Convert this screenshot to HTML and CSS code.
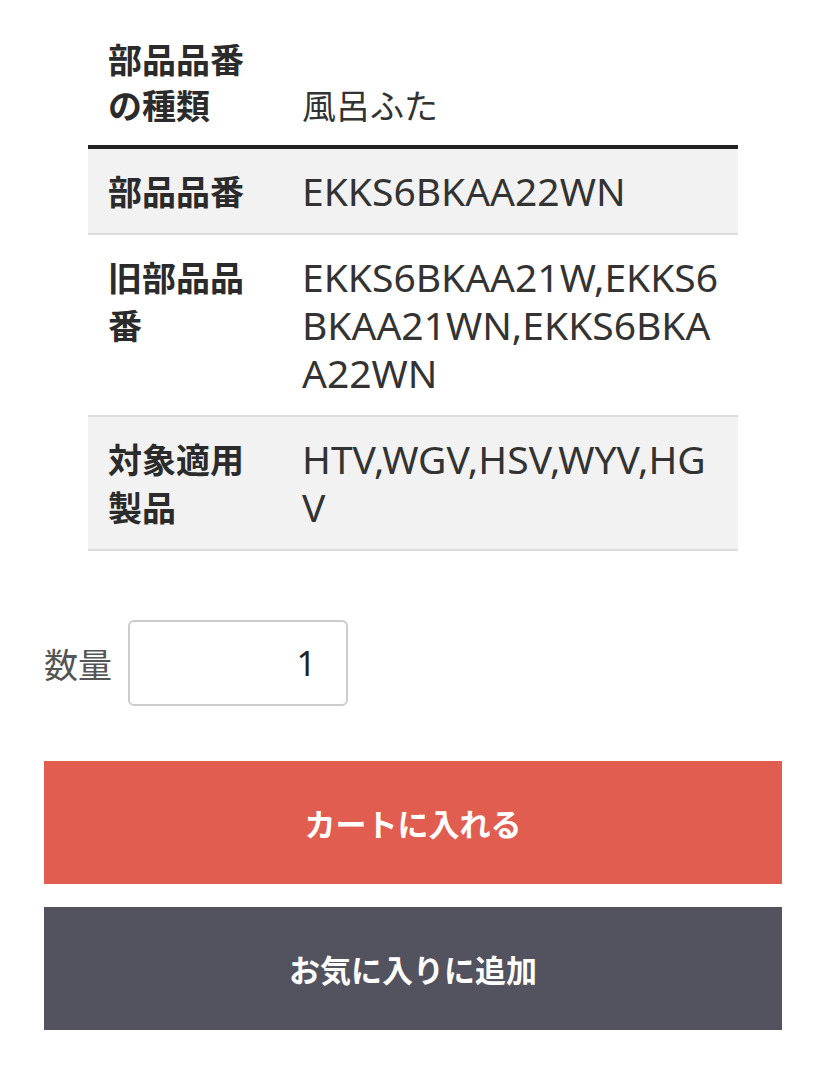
FILE: index.html
```html
<!DOCTYPE html>
<html lang="ja">
<head>
<meta charset="utf-8">
<link rel="stylesheet" href="styles.css">
</head>
<body>
<div class="page">
  <table class="spec">
    <colgroup>
      <col class="col-head">
      <col class="col-val">
    </colgroup>
    <tr class="first">
      <th>部品品番の種類</th>
      <td>風呂ふた</td>
    </tr>
    <tr class="shade">
      <th>部品品番</th>
      <td class="latin">EKKS6BKAA22WN</td>
    </tr>
    <tr>
      <th>旧部品品番</th>
      <td class="latin">EKKS6BKAA21W,EKKS6BKAA21WN,EKKS6BKAA22WN</td>
    </tr>
    <tr class="shade">
      <th>対象適用製品</th>
      <td class="latin">HTV,WGV,HSV,WYV,HGV</td>
    </tr>
  </table>

  <div class="qty">
    <label class="qty-label" for="qty">数量</label>
    <input class="qty-input" id="qty" type="text" value="1">
  </div>

  <div class="actions">
    <button class="btn btn-cart">カートに入れる</button>
    <button class="btn btn-fav">お気に入りに追加</button>
  </div>
</div>
</body>
</html>
```

FILE: styles.css
```css
html, body {
  margin: 0;
  padding: 0;
  background: #fff;
}
body {
  font-family: "Noto Sans", "Noto Sans CJK JP", sans-serif;
  color: #333;
}
.page {
  padding: 18px 46px 40px 44px;
}
.spec {
  margin-left: 44px;
  width: 650px;
  table-layout: fixed;
  border-collapse: collapse;
  font-size: 34px;
  line-height: 48px;
}
.col-head {
  width: 214px;
}
.spec th, .spec td {
  vertical-align: top;
  text-align: left;
  border-bottom: 2px solid #dddddd;
  word-break: break-all;
}
.spec th {
  padding: 18px 32px 18px 20px;
  font-family: "Noto Sans CJK JP", sans-serif;
  font-weight: 700;
  color: #2b2b2b;
}
.spec td {
  padding: 18px 16px 18px 0;
  font-family: "Noto Sans CJK JP", sans-serif;
  font-weight: 400;
  color: #333;
}
.spec td.latin {
  font-family: "Noto Sans", sans-serif;
  font-size: 39px;
}
.spec tr.first th, .spec tr.first td {
  border-bottom: 4px solid #222;
  vertical-align: bottom;
  padding-top: 18px;
  padding-bottom: 17px;
  line-height: 46px;
}
.spec tr.shade {
  background: #f2f2f2;
}
.qty {
  display: flex;
  align-items: center;
  gap: 16px;
  margin-top: 69px;
}
.qty-label {
  font-family: "Noto Sans CJK JP", sans-serif;
  font-size: 34px;
  color: #555;
}
.qty-input {
  box-sizing: border-box;
  width: 220px;
  height: 86px;
  border: 2px solid #cccccc;
  border-radius: 6px;
  padding: 0 30px 0 10px;
  font-family: "Noto Sans", sans-serif;
  font-size: 34px;
  color: #222;
  text-align: right;
  background: #fff;
}
.actions {
  display: flex;
  flex-direction: column;
  gap: 23px;
  margin-top: 55px;
}
.btn {
  display: block;
  width: 738px;
  height: 123px;
  border: none;
  font-family: "Noto Sans CJK JP", sans-serif;
  font-size: 31px;
  font-weight: 700;
  color: #fff;
  padding: 0;
}
.btn-cart {
  background: #e05d50;
}
.btn-fav {
  background: #53535f;
}
```
